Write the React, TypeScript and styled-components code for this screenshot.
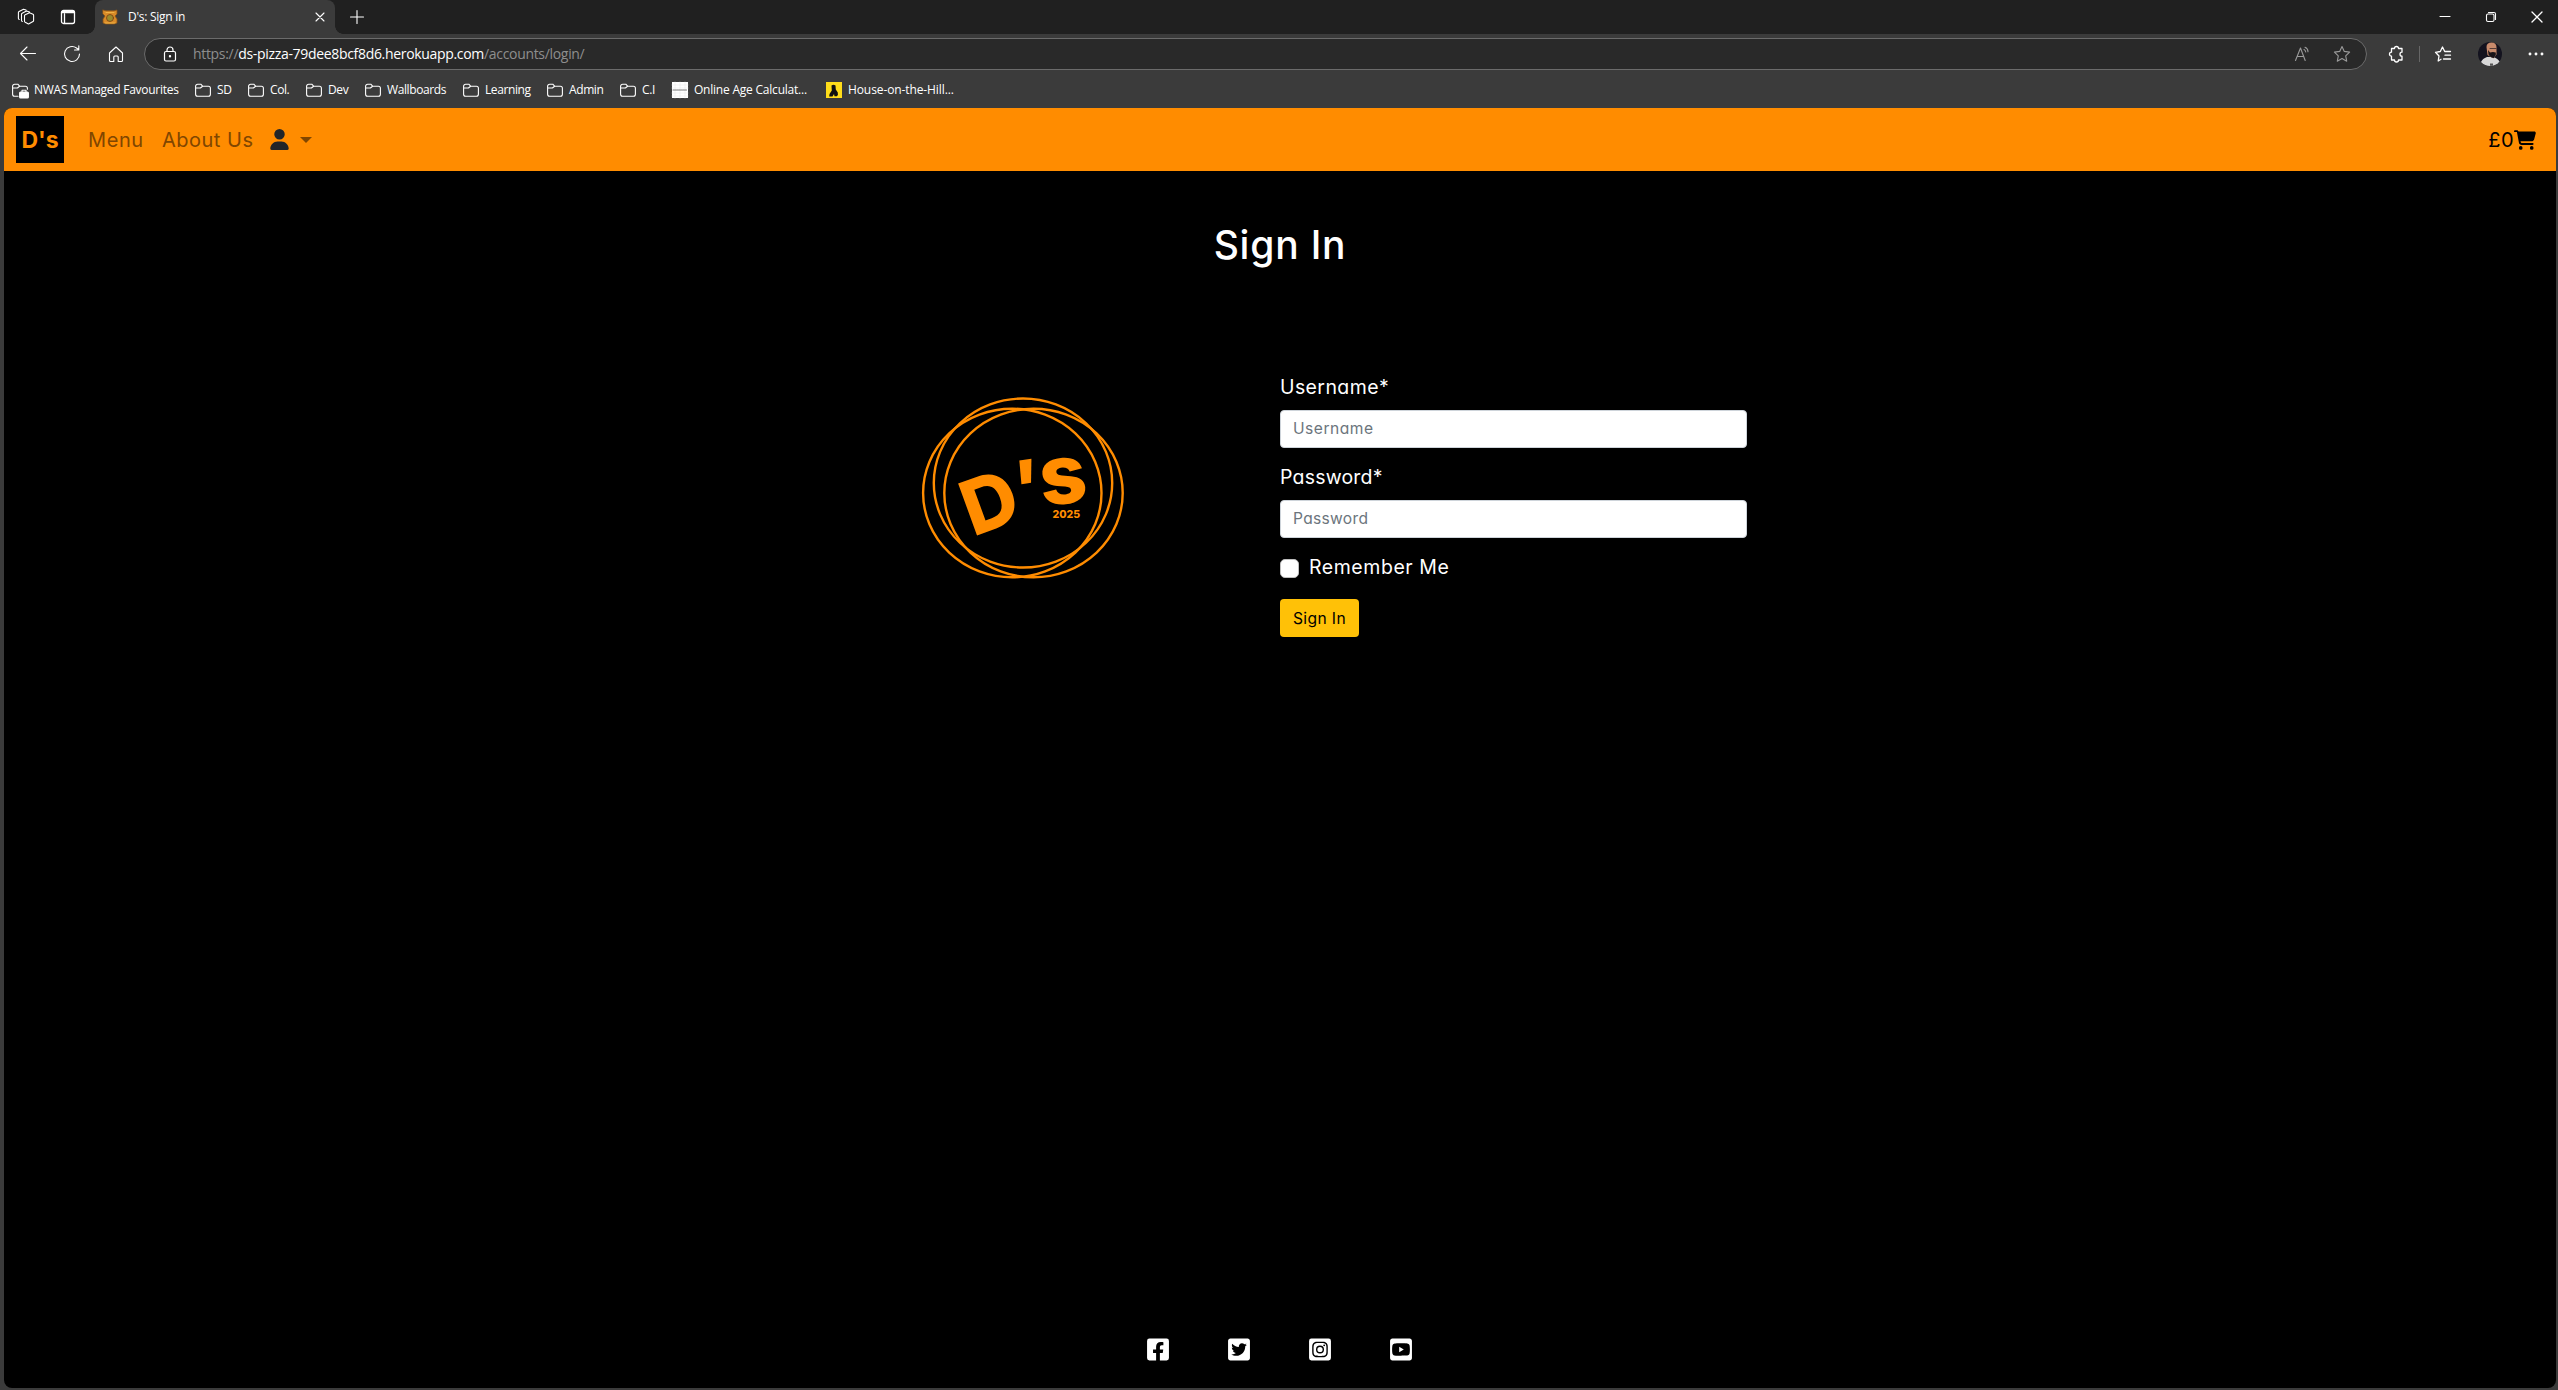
import React from 'react';
import styled, { createGlobalStyle } from 'styled-components';
import { FaFacebookSquare, FaTwitterSquare, FaInstagramSquare, FaYoutubeSquare } from 'react-icons/fa';
import { FaUser, FaCartShopping } from 'react-icons/fa6';

const Global = createGlobalStyle`
  *, *::before, *::after { box-sizing: border-box; }
  html, body { margin: 0; height: 100%; overflow: hidden; }
  body { background: #3b3b3b; }
  button, input { font: inherit; }
`;

const Window = styled.div`
  display: flex;
  flex-direction: column;
  width: 2558px;
  height: 1390px;
  background: #3b3b3b;
  color: #fff;
  font-family: 'Open Sans', 'Noto Sans', sans-serif;
  font-size: 12px;
`;

const TabStrip = styled.div`
  display: flex;
  height: 34px;
  background: #202020;
  align-items: center;
`;

const StripTools = styled.div`
  display: flex;
  width: 95px;
  padding-left: 17px;
  gap: 25px;
  align-items: center;
`;

const Glyph = styled.svg<{ $size?: number; $color?: string; $w?: number }>`
  flex: none;
  width: ${p => p.$size ?? 18}px;
  height: ${p => p.$size ?? 18}px;
  fill: none;
  stroke: ${p => p.$color ?? '#fff'};
  stroke-width: ${p => p.$w ?? 1.1};
  stroke-linecap: round;
  stroke-linejoin: round;
  overflow: visible;
`;

const Tab = styled.div`
  position: relative;
  display: flex;
  align-items: center;
  width: 240px;
  height: 34px;
  padding: 0 10px 0 7px;
  background: #3b3b3b;
  border-radius: 8px 8px 0 0;
  &::before, &::after {
    content: '';
    position: absolute;
    bottom: 0;
    width: 8px;
    height: 8px;
  }
  &::before { left: -8px; background: radial-gradient(circle at 0 0, #202020 7.5px, #3b3b3b 8px); }
  &::after { right: -8px; background: radial-gradient(circle at 100% 0, #202020 7.5px, #3b3b3b 8px); }
`;

const TabTitle = styled.span`
  flex: 1;
  margin-left: 10px;
  padding-bottom: 1px;
  letter-spacing: -0.28px;
`;

const NewTab = styled.div`
  display: flex;
  margin-left: 15px;
  flex: 1;
`;

const WindowButtons = styled.div`
  display: flex;
  gap: 36px;
  padding-right: 16px;
  align-items: center;
`;

const Toolbar = styled.div`
  display: flex;
  align-items: center;
  height: 40px;
  padding: 0 14px 0 19px;
`;

const NavTools = styled.div`
  display: flex;
  width: 125px;
  gap: 26px;
`;

const AddressBar = styled.div`
  display: flex;
  align-items: center;
  width: 2223px;
  height: 32px;
  padding: 0 16px 0 17px;
  background: #292929;
  border: 1px solid #6b6b6b;
  border-radius: 16px;
`;

const Url = styled.div`
  flex: 1;
  margin-left: 15px;
  padding-bottom: 1px;
  font-size: 14px;
  letter-spacing: -0.32px;
  color: #8e8e8e;
  white-space: nowrap;
`;

const Host = styled.span`
  color: #fff;
`;

const AddressTools = styled.div`
  display: flex;
  gap: 23px;
`;

const BrowserTools = styled.div`
  display: flex;
  flex: 1;
  align-items: center;
  justify-content: space-between;
  padding-left: 21px;
`;

const ToolGroup = styled.div<{ $gap: number }>`
  display: flex;
  align-items: center;
  gap: ${p => p.$gap}px;
`;

const Divider = styled.div`
  width: 1px;
  height: 16px;
  background: #666;
`;

const Bookmarks = styled.div`
  display: flex;
  align-items: center;
  height: 34px;
  padding: 0 0 2px 12px;
`;

const Bookmark = styled.div<{ $width: number; $spacing?: number }>`
  display: flex;
  align-items: center;
  gap: 6px;
  width: ${p => p.$width}px;
  white-space: nowrap;
  letter-spacing: ${p => p.$spacing ?? -0.4}px;
`;

const BookmarkText = styled.span`
  padding-bottom: 1px;
`;

const Page = styled.div`
  display: flex;
  flex-direction: column;
  width: 2552px;
  height: 1280px;
  margin-left: 4px;
  border-radius: 8px;
  overflow: hidden;
  background: #000;
  font-family: Inter, 'Open Sans', sans-serif;
  font-feature-settings: 'cv11' 1;
  font-size: 19.5px;
`;

const Navbar = styled.nav`
  display: flex;
  align-items: center;
  height: 63px;
  padding: 0 20px 0 12px;
  background: #ff8c00;
  color: #804600;
`;

const Brand = styled.div`
  display: flex;
  align-items: center;
  justify-content: center;
  width: 48px;
  height: 47px;
  margin-right: 24px;
  background: #000;
  color: #ff8c00;
  font-size: 23px;
  font-weight: 700;
`;

const NavLink = styled.a<{ $width: number; $spacing: number }>`
  width: ${p => p.$width}px;
  margin-right: 17px;
  font-size: 20px;
  letter-spacing: ${p => p.$spacing}px;
  white-space: nowrap;
`;

const Account = styled.div`
  display: flex;
  flex: 1;
  align-items: center;
  gap: 10px;
  svg { color: #212529; }
`;

const Caret = styled.span`
  border: 6px solid transparent;
  border-top-color: #804600;
  border-bottom: 0;
`;

const Basket = styled.div`
  display: flex;
  align-items: center;
  color: #000;
  font-size: 20px;
  letter-spacing: 0.4px;
`;

const Main = styled.main`
  display: flex;
  flex: 1;
  flex-direction: column;
`;

const Title = styled.h1`
  margin: 48px 0 0;
  text-align: center;
  font-size: 39px;
  line-height: 52px;
  font-weight: 500;
  letter-spacing: 0.8px;
`;

const Columns = styled.div`
  display: flex;
  margin-top: 101px;
`;

const LogoColumn = styled.div`
  width: 1276px;
  padding: 15px 0 0 906px;
`;

const Logo = styled.svg`
  display: block;
  width: 230px;
  height: 200px;
  fill: none;
  stroke: #ff8c00;
  stroke-width: 2.4;
  text {
    fill: #ff8c00;
    stroke: none;
    font-family: Inter, sans-serif;
    font-weight: 800;
  }
`;

const Form = styled.form`
  width: 467px;
`;

const Label = styled.label<{ $spacing: number }>`
  display: block;
  height: 30px;
  line-height: 30px;
  margin-bottom: 8px;
  letter-spacing: ${p => p.$spacing}px;
`;

const Input = styled.input<{ $spacing: number }>`
  display: block;
  width: 100%;
  height: 38px;
  margin-bottom: 14px;
  padding: 0 12px 1px;
  border: 1px solid #ced4da;
  border-radius: 4px;
  background: #fff;
  font-size: 15.6px;
  letter-spacing: ${p => p.$spacing}px;
  &::placeholder { color: #6c757d; opacity: 1; }
`;

const Remember = styled.label`
  display: flex;
  align-items: center;
  gap: 10px;
  height: 30px;
  margin: 0 0 17px;
  letter-spacing: 0.55px;
`;

const Checkbox = styled.input`
  appearance: none;
  width: 19px;
  height: 19px;
  margin: 2px 0 0;
  border: 1px solid #bfbfbf;
  border-radius: 5px;
  background: #fff;
`;

const Submit = styled.button`
  width: 79px;
  height: 38px;
  padding: 0;
  border: 0;
  border-radius: 4px;
  background: #ffc107;
  color: #000;
  font-size: 15.6px;
  letter-spacing: 0.4px;
`;

const Footer = styled.footer`
  display: flex;
  justify-content: center;
  gap: 59px;
  padding: 0 1px 26px 0;
  svg { display: block; width: 22px; height: 25px; }
`;

const Folder = () => (
  <Glyph $size={16} viewBox="0 0 16 16">
    <path d="M.6 4.200a2 2 0 0 1 2-2h3.200l1.800 2h5.800a2 2 0 0 1 2 2v6a2 2 0 0 1-2 2H2.600a2 2 0 0 1-2-2zM.6 6h4.800l2.200-1.800" />
  </Glyph>
);

const ManagedFolder = () => (
  <Glyph $size={16} viewBox="0 0 16 16">
    <path d="M6 14.200H2.600a2 2 0 0 1-2-2V4.200a2 2 0 0 1 2-2h3.200l1.800 2h5.800a2 2 0 0 1 2 2v1M.6 6h4.800l2.200-1.800" />
    <rect x="7.600" y="10" width="8.800" height="6" rx="1" fill="#fff" />
    <path d="M10 10V8.300h4V10" />
  </Glyph>
);

const CalcIcon = () => (
  <Glyph $size={16} viewBox="0 0 16 16" strokeLinecap="butt">
    <path d="M0 0h16v16H0z" fill="#fff" stroke="none" />
    <path d="M0 3h16M0 6h16M0 11h16M0 14h16M3 0v16M8 0v16M13 0v16" stroke="#e6e6e6" strokeWidth=".5" />
    <path d="M1 8h14" stroke="#777" strokeDasharray="1.500 .5" />
  </Glyph>
);

const HillIcon = () => (
  <Glyph $size={16} viewBox="0 0 16 16">
    <path d="M0 0h16v16H0z" fill="#ffdd1a" stroke="none" />
    <path d="M5.500 3.500q2-1.500 4 0l.3 4 2 3q.7 2.500-1 3.700H8.500L8 12l-1.500 2.500H3.200l.3-2.500 2.300-3.500z" fill="#111" stroke="none" />
  </Glyph>
);

const Bear = () => (
  <Glyph $size={16} viewBox="0 0 16 16" $w={0.8}>
    <path d="M1 1l3 .8h8L15 1v4l-2 2 2 3v4l-3 1H4l-3-1v-4l2-3-2-2z" fill="#d98b28" stroke="#8a5417" />
    <circle cx="8" cy="9" r="3.500" fill="#9b8b2c" stroke="#7a3d12" />
    <path d="M4 3.500h8M3 14h10" stroke="#f6bd4b" />
  </Glyph>
);

const bookmarks: { text: string; width: number; icon: React.ReactNode; spacing?: number }[] = [
  { text: 'NWAS Managed Favourites', width: 183, icon: <ManagedFolder />, spacing: -0.26 },
  { text: 'SD', width: 53, icon: <Folder /> },
  { text: 'Col.', width: 58, icon: <Folder /> },
  { text: 'Dev', width: 59, icon: <Folder /> },
  { text: 'Wallboards', width: 98, icon: <Folder /> },
  { text: 'Learning', width: 84, icon: <Folder /> },
  { text: 'Admin', width: 73, icon: <Folder /> },
  { text: 'C.I', width: 52, icon: <Folder /> },
  { text: 'Online Age Calculat...', width: 154, icon: <CalcIcon />, spacing: -0.22 },
  { text: 'House-on-the-Hill...', width: 140, icon: <HillIcon />, spacing: -0.1 },
];

export default function App() {
  return (
    <Window>
      <Global />
      <TabStrip>
        <StripTools>
          <Glyph $size={18} viewBox="0 0 18 18">
            <path d="M7.500 7.700Q7.500 7 8.200 6.700L12.500 4.700 16 6.200q.6.300.6 1v5.300q0 .7-.6 1L12 15.800q-.5.300-1 0L8.200 14.300q-.7-.4-.7-1zM5.300 13.500q-.8-.4-.8-1.200V6.200q0-.7.7-1L9.500 3l3 1M2.200 11.500q-.8-.4-.8-1.200V4.500q0-.7.7-1L6.500 1.200l2.500.8" />
          </Glyph>
          <Glyph $size={16} viewBox="0 0 16 16" $w={1.3}>
            <rect x="1.500" y="1.500" width="13" height="13" rx="2" />
            <path d="M1.500 3.500h13M2 2.500h12M4.500 5v9" />
          </Glyph>
        </StripTools>
        <Tab>
          <Bear />
          <TabTitle>D's: Sign in</TabTitle>
          <Glyph $size={10} viewBox="0 0 10 10"><path d="M1 1l8 8M9 1L1 9" /></Glyph>
        </Tab>
        <NewTab><Glyph $size={14} viewBox="0 0 14 14"><path d="M7 .5v13M.5 7h13" /></Glyph></NewTab>
        <WindowButtons>
          <Glyph $size={10} viewBox="0 0 10 10"><path d="M0 4.500h10" /></Glyph>
          <Glyph $size={10} viewBox="0 0 10 10"><rect x=".5" y="2" width="7.500" height="7.500" rx="1.500" /><path d="M2.500 .5H8a1.500 1.500 0 0 1 1.500 1.500V7.500" /></Glyph>
          <Glyph $size={10} viewBox="0 0 10 10" $w={1.3}><path d="M0 0l10 10M10 0L0 10" /></Glyph>
        </WindowButtons>
      </TabStrip>
      <Toolbar>
        <NavTools>
          <Glyph viewBox="0 0 18 18"><path d="M16.500 8.500H1.500M8 2L1.500 8.500 8 15" /></Glyph>
          <Glyph viewBox="0 0 18 18"><path d="M16.500 9A7.500 7.500 0 1 1 13.500 3l2 1.500M15.800 .8V5H11.500" /></Glyph>
          <Glyph viewBox="0 0 18 18"><path d="M2.500 8L9 2l6.500 6v7.500a1 1 0 0 1-1 1H11.200V12a1 1 0 0 0-1-1H7.800a1 1 0 0 0-1 1v4.500H3.500a1 1 0 0 1-1-1z" /></Glyph>
        </NavTools>
        <AddressBar>
          <Glyph $size={16} viewBox="0 0 16 16" $w={1.2}><rect x="2.500" y="5.500" width="11" height="9.500" rx="1.500" /><path d="M5 5.500V4a3 3 0 0 1 6 0v1.500" /><circle cx="8" cy="10.200" r=".6" fill="#fff" /></Glyph>
          <Url>https://<Host>ds-pizza-79dee8bcf8d6.herokuapp.com</Host>/accounts/login/</Url>
          <AddressTools>
            <Glyph $size={16} viewBox="0 0 16 16" $color="#9a9a9a"><path d="M.5 14.500L5.500 2l4.700 12.500M2.300 10.500h6.300M9 3.500c1 .5 1.600 1.500 1.700 2.500M10 1.200c1.800.8 3 2.600 3 4.500" /></Glyph>
            <Glyph $size={16} viewBox="0 0 16 16" $color="#9a9a9a"><path d="M8 .5l2.300 4.900 5.300.7-3.900 3.700 1 5.400L8 12.600l-4.700 2.600 1-5.400L.4 6.100l5.300-.7z" /></Glyph>
          </AddressTools>
        </AddressBar>
        <BrowserTools>
          <ToolGroup $gap={15}>
            <Glyph $size={16} viewBox="0 0 16 16" $w={1.3}><path d="M3.500 2.500h3a2 2 0 0 1 4 0H14v3.700a2 2 0 0 0 0 4v3.800h-3.500a2 2 0 0 1-4 0h-3v-3.800a2 2 0 0 1 0-4z" /></Glyph>
            <Divider />
            <Glyph $size={16} viewBox="0 0 16 16" $w={1.3}><path d="M6 13.300L3.200 15l.8-5L.5 6.300 5.300 5.500 7.500 1l2.200 4.500H15.500M10 9.200h5.500M8.500 13h7" /></Glyph>
          </ToolGroup>
          <ToolGroup $gap={26}>
            <Glyph $size={24} viewBox="0 0 24 24">
              <circle cx="12" cy="12" r="12" fill="#14131f" stroke="none" />
              <path d="M3 20q1.500-3.500 6-5h6q4.500 1 6.500 4.500a12 12 0 0 1-18.500.5z" fill="#d8d8d8" stroke="none" />
              <path d="M8.500 5q0-4.300 5-4.500 5 0 5 5v7l-3 4-6-3.500z" fill="#c98b6c" stroke="none" />
              <path d="M10 8l2 2.500q3-1 5.800 0V13l-2 3q-3 0-5.300-3.500z" fill="#181318" stroke="none" />
              <path d="M12 6.500h6" stroke="#3a2a2a" strokeWidth=".8" />
              <path d="M12 21.500h3v2.300h-3z" fill="#555" stroke="none" />
            </Glyph>
            <Glyph $size={16} viewBox="0 0 16 16"><g fill="#fff"><circle cx="2" cy="8" r=".9" /><circle cx="8" cy="8" r=".9" /><circle cx="14" cy="8" r=".9" /></g></Glyph>
          </ToolGroup>
        </BrowserTools>
      </Toolbar>
      <Bookmarks>
        {bookmarks.map(b => (
          <Bookmark key={b.text} $width={b.width} $spacing={b.spacing}>
            {b.icon}
            <BookmarkText>{b.text}</BookmarkText>
          </Bookmark>
        ))}
      </Bookmarks>
      <Page>
        <Navbar>
          <Brand>D's</Brand>
          <NavLink $width={57} $spacing={0.6}>Menu</NavLink>
          <NavLink $width={90} $spacing={0.5}>About Us</NavLink>
          <Account><FaUser size={21} /><Caret /></Account>
          <Basket>£0<FaCartShopping size={22} /></Basket>
        </Navbar>
        <Main>
          <Title>Sign In</Title>
          <Columns>
            <LogoColumn>
              <Logo viewBox="910 387 230 200">
                <ellipse cx="1012.300" cy="493" rx="89.200" ry="84.300" />
                <ellipse cx="1033.500" cy="493" rx="89.200" ry="84.300" />
                <ellipse cx="1023" cy="483" rx="89.200" ry="84.500" />
                <text fontSize="76" transform="translate(973 537) rotate(-20)">D</text>
                <text fontSize="76" transform="translate(1014 517) rotate(-8) skewX(-6)">'</text>
                <text fontSize="83" transform="translate(1042 506) rotate(-6)">s</text>
                <text fontSize="10.600" x="1052.500" y="518">2025</text>
              </Logo>
            </LogoColumn>
            <Form>
              <Label $spacing={0.4}>Username*</Label>
              <Input placeholder="Username" $spacing={0.5} />
              <Label $spacing={0.2}>Password*</Label>
              <Input type="password" placeholder="Password" $spacing={0.3} />
              <Remember><Checkbox type="checkbox" />Remember Me</Remember>
              <Submit type="button">Sign In</Submit>
            </Form>
          </Columns>
        </Main>
        <Footer>
          <FaFacebookSquare />
          <FaTwitterSquare />
          <FaInstagramSquare />
          <FaYoutubeSquare />
        </Footer>
      </Page>
    </Window>
  );
}
